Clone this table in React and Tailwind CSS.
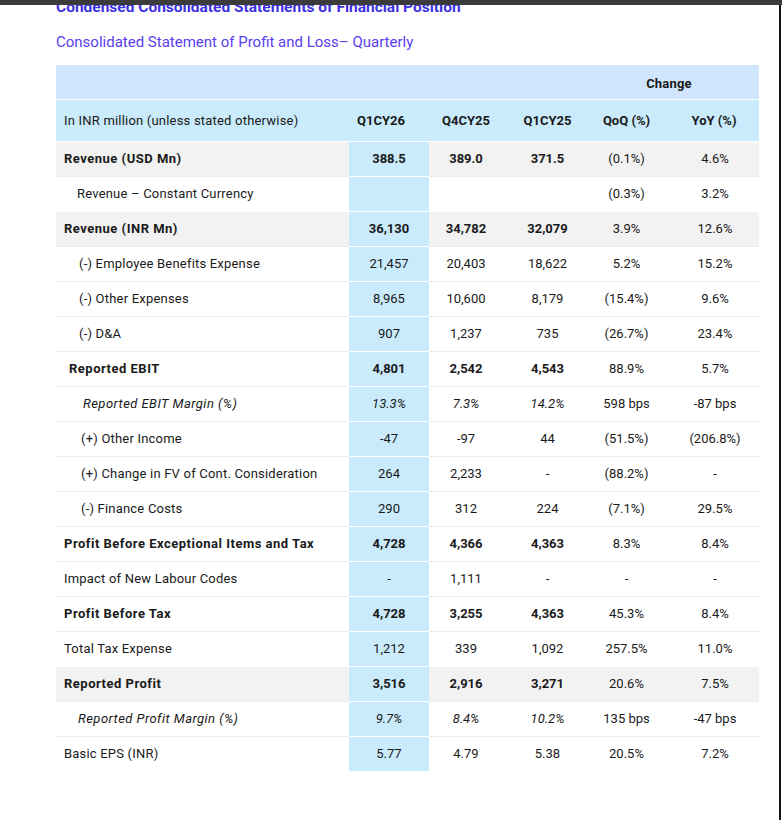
import React from "react";

const rows = [
  { label: "Revenue (USD Mn)", v: ["388.5", "389.0", "371.5", "(0.1%)", "4.6%"], bold: true, gray: true, pl: "pl-[8px]" },
  { label: "Revenue – Constant Currency", v: ["", "", "", "(0.3%)", "3.2%"], pl: "pl-[21px]" },
  { label: "Revenue (INR Mn)", v: ["36,130", "34,782", "32,079", "3.9%", "12.6%"], bold: true, gray: true, pl: "pl-[8px]" },
  { label: "(-) Employee Benefits Expense", v: ["21,457", "20,403", "18,622", "5.2%", "15.2%"], pl: "pl-[23px]" },
  { label: "(-) Other Expenses", v: ["8,965", "10,600", "8,179", "(15.4%)", "9.6%"], pl: "pl-[23px]" },
  { label: "(-) D&A", v: ["907", "1,237", "735", "(26.7%)", "23.4%"], pl: "pl-[23px]" },
  { label: "Reported EBIT", v: ["4,801", "2,542", "4,543", "88.9%", "5.7%"], bold: true, pl: "pl-[13px]" },
  { label: "Reported EBIT Margin (%)", v: ["13.3%", "7.3%", "14.2%", "598 bps", "-87 bps"], italic: true, pl: "pl-[27px]" },
  { label: "(+) Other Income", v: ["-47", "-97", "44", "(51.5%)", "(206.8%)"], pl: "pl-[25px]" },
  { label: "(+) Change in FV of Cont. Consideration", v: ["264", "2,233", "-", "(88.2%)", "-"], pl: "pl-[25px]" },
  { label: "(-) Finance Costs", v: ["290", "312", "224", "(7.1%)", "29.5%"], pl: "pl-[25px]" },
  { label: "Profit Before Exceptional Items and Tax", v: ["4,728", "4,366", "4,363", "8.3%", "8.4%"], bold: true, pl: "pl-[8px]" },
  { label: "Impact of New Labour Codes", v: ["-", "1,111", "-", "-", "-"], pl: "pl-[8px]" },
  { label: "Profit Before Tax", v: ["4,728", "3,255", "4,363", "45.3%", "8.4%"], bold: true, pl: "pl-[8px]" },
  { label: "Total Tax Expense", v: ["1,212", "339", "1,092", "257.5%", "11.0%"], pl: "pl-[8px]" },
  { label: "Reported Profit", v: ["3,516", "2,916", "3,271", "20.6%", "7.5%"], bold: true, gray: true, pl: "pl-[8px]" },
  { label: "Reported Profit Margin (%)", v: ["9.7%", "8.4%", "10.2%", "135 bps", "-47 bps"], italic: true, pl: "pl-[22px]" },
  { label: "Basic EPS (INR)", v: ["5.77", "4.79", "5.38", "20.5%", "7.2%"], pl: "pl-[8px]" },
];

const grid = "grid grid-cols-[293px_80px_74px_89px_69px_98px]";

function Row({ r }) {
  const line = r.gray ? "border-white" : "border-[#ececec]";
  const bg = r.gray ? "bg-[#f2f2f2]" : "bg-white";
  const labelStyle = r.bold
    ? "font-bold tracking-[0.5px]"
    : r.italic
    ? "italic tracking-[0.45px]"
    : "tracking-[0.2px]";
  const numCls = (i) => {
    let c = "flex items-center justify-center";
    if (i < 3 && r.bold) c += " font-bold";
    if (i < 3 && r.italic) c += " italic";
    if (i === 4) c += " pl-[10px]";
    return c;
  };
  return (
    <div className={`${grid} h-[35px] ${bg}`}>
      <div className={`flex items-center border-t ${line} ${r.pl} ${labelStyle}`}>
        {r.label}
      </div>
      {r.v.map((val, i) => (
        <div
          key={i}
          className={`${numCls(i)} border-t ${i === 0 ? "border-white bg-[#c9ebfb]" : line}`}
        >
          {val}
        </div>
      ))}
    </div>
  );
}

export default function App() {
  return (
    <div
      className="min-h-[820px] bg-white text-[#1a1a1a] flex flex-col"
      style={{ fontFamily: "Roboto, 'Liberation Sans', sans-serif" }}
    >
      <div className="h-[5px] bg-[#3b3b3b] shrink-0" />
      <div className="flex flex-1">
        <div className="w-[779px] pl-[56px]">
          <div className="h-[8px] overflow-hidden">
            <p className="-mt-[5px] text-[15.5px] leading-[15px] font-bold text-[#3d30e0]">
              Condensed Consolidated Statements of Financial Position
            </p>
          </div>
          <p className="mt-[19px] text-[15px] leading-[20px] text-[#5a40ee]">
            Consolidated Statement of Profit and Loss– Quarterly
          </p>
          <div className="mt-[13px] w-[703px] text-[13px]">
            <div className={`${grid} h-[35px] bg-[#d1e6fc] border-b border-white`}>
              <div className="col-start-5 col-span-2 flex items-center justify-center pr-[13px] pt-[4px] font-bold tracking-[0.2px]">
                Change
              </div>
            </div>
            <div className={`${grid} h-[41px] bg-[#c9ebfb] font-bold`}>
              <div className="flex items-center pl-[8px] font-normal tracking-[0.2px]">
                In INR million (unless stated otherwise)
              </div>
              <div className="flex items-center justify-center pr-[16px]">Q1CY26</div>
              <div className="flex items-center justify-center">Q4CY25</div>
              <div className="flex items-center justify-center">Q1CY25</div>
              <div className="flex items-center justify-center">QoQ (%)</div>
              <div className="flex items-center justify-center pl-[8px]">YoY (%)</div>
            </div>
            {rows.map((r, i) => (
              <Row key={i} r={r} />
            ))}
          </div>
        </div>
        <div className="w-[2px] bg-[#151515]" />
        <div className="flex-1" />
      </div>
    </div>
  );
}
